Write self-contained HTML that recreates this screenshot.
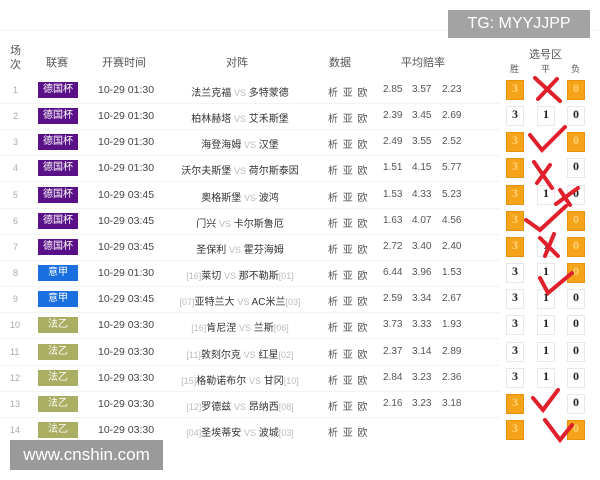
<!DOCTYPE html>
<html><head><meta charset="utf-8"><style>
body{margin:0;width:600px;height:480px;background:#fff;position:relative;overflow:hidden;font-family:"Liberation Sans","Noto Sans CJK SC",sans-serif;color:#444}
.a{position:absolute;white-space:nowrap}
.h{font-size:11px;color:#555}
.n{font-size:9px;color:#aaa;left:10px}
.lg{left:38px;width:40px;height:16px;color:#fff;font-size:10px;text-align:center;line-height:16px}
.t{left:98px;font-size:10.5px;color:#444}
.m{width:200px;left:140px;text-align:center;font-size:10px;color:#333}
.m i{font-style:normal;color:#bbb;font-size:9px}
.d{left:328px;font-size:10px;color:#555;letter-spacing:1px}
.o{font-size:10px;color:#555}
.b{width:18px;height:20px;line-height:20px;text-align:center;font:bold 12px "Liberation Serif",serif;color:#222;border:1px solid #e8e8e8;box-sizing:border-box;background:#fff}
.or{background:#f5a318;border-color:#e89010;color:#ffd27a}
</style></head><body>
<div class="a" style="left:0;top:30px;width:600px;height:1px;background:#f2f2f2"></div>
<div class="a h" style="left:10px;top:44px;line-height:14px;font-size:11px">场<br>次</div>
<div class="a h" style="left:46px;top:54px">联赛</div>
<div class="a h" style="left:102px;top:54px">开赛时间</div>
<div class="a h" style="left:226px;top:54px">对阵</div>
<div class="a h" style="left:329px;top:54px">数据</div>
<div class="a h" style="left:401px;top:54px">平均赔率</div>
<div class="a h" style="left:529px;top:46px">选号区</div>
<div class="a" style="left:510px;top:62px;font-size:9px;color:#555">胜</div>
<div class="a" style="left:541px;top:62px;font-size:9px;color:#555">平</div>
<div class="a" style="left:571px;top:62px;font-size:9px;color:#555">负</div>
<div class="a" style="left:448px;top:10px;width:142px;height:28px;background:#a3a3a3;color:#fff;font-size:16px;line-height:28px;text-align:center">TG: MYYJJPP</div>
<div id="rows"></div>
<div class="a" style="left:10px;top:440px;width:153px;height:30px;background:#9a9a9a;color:#fff;font-size:17px;line-height:30px;text-align:center">www.cnshin.com</div>
<svg class="a" style="left:0;top:0" width="600" height="480">
<g stroke="#e0202a" stroke-width="4" fill="none" stroke-linecap="round">
<path d="M535 78 L560 101 M557 79 L538 99"/>
<path d="M530 135 L542 150 L565 127"/>
<path d="M534 162 L552 188 M550 165 L537 183"/>
<path d="M556 204 L578 188 M560 190 L570 205"/>
<path d="M526 220 L540 230 L566 206"/>
<path d="M540 238 L558 256 M554 234 L545 256"/>
<path d="M540 278 L548 293 L572 273"/>
<path d="M533 398 L543 410 L558 390"/>
<path d="M545 420 L560 440 L572 425"/>
</g></svg>
<script>
var R=[["1","德国杯","#5a1087","10-29 01:30","","法兰克福","多特蒙德","","2.85","3.57","2.23","oho"],
["2","德国杯","#5a1087","10-29 01:30","","柏林赫塔","艾禾斯堡","","2.39","3.45","2.69","www"],
["3","德国杯","#5a1087","10-29 01:30","","海登海姆","汉堡","","2.49","3.55","2.52","oho"],
["4","德国杯","#5a1087","10-29 01:30","","沃尔夫斯堡","荷尔斯泰因","","1.51","4.15","5.77","ohw"],
["5","德国杯","#5a1087","10-29 03:45","","奥格斯堡","波鸿","","1.53","4.33","5.23","oww"],
["6","德国杯","#5a1087","10-29 03:45","","门兴","卡尔斯鲁厄","","1.63","4.07","4.56","oho"],
["7","德国杯","#5a1087","10-29 03:45","","圣保利","霍芬海姆","","2.72","3.40","2.40","owo"],
["8","意甲","#1a6fe0","10-29 01:30","[16]","莱切","那不勒斯","[01]","6.44","3.96","1.53","wwo"],
["9","意甲","#1a6fe0","10-29 03:45","[07]","亚特兰大","AC米兰","[03]","2.59","3.34","2.67","www"],
["10","法乙","#a9ae62","10-29 03:30","[16]","肯尼涅","兰斯","[06]","3.73","3.33","1.93","www"],
["11","法乙","#a9ae62","10-29 03:30","[11]","敦刻尔克","红星","[02]","2.37","3.14","2.89","www"],
["12","法乙","#a9ae62","10-29 03:30","[15]","格勒诺布尔","甘冈","[10]","2.84","3.23","2.36","www"],
["13","法乙","#a9ae62","10-29 03:30","[12]","罗德兹","昂纳西","[08]","2.16","3.23","3.18","ohw"],
["14","法乙","#a9ae62","10-29 03:30","[04]","圣埃蒂安","波城","[03]","","","","oho"]];
var h="";R.forEach(function(r,i){var c=90+i*26.15,t=c-6;
h+='<div class="a n" style="top:'+(c-5)+'px;left:'+(r[0].length>1?10:13)+'px">'+r[0]+'</div>';
h+='<div class="a lg" style="top:'+(c-8)+'px;background:'+r[2]+'">'+r[1]+'</div>';
h+='<div class="a t" style="top:'+t+'px">'+r[3]+'</div>';
h+='<div class="a m" style="top:'+t+'px"><i>'+r[4]+'</i>'+r[5]+' <i>VS</i> '+r[6]+'<i>'+r[7]+'</i></div>';
h+='<div class="a d" style="top:'+t+'px">析 亚 欧</div>';
h+='<div class="a o" style="top:'+t+'px;left:383px">'+r[8]+'</div><div class="a o" style="top:'+t+'px;left:412px">'+r[9]+'</div><div class="a o" style="top:'+t+'px;left:442px">'+r[10]+'</div>';
var xs=[506,537,567],v=["3","1","0"];for(var k=0;k<3;k++){var s=r[11][k];if(s=="h")continue;
h+='<div class="a b'+(s=="o"?' or':'')+'" style="left:'+xs[k]+'px;top:'+(c-10)+'px">'+v[k]+'</div>';}
if(i<13)h+='<div class="a" style="left:0;top:'+(c+13)+'px;width:500px;height:1px;background:#f3f3f3"></div>';
});document.getElementById("rows").innerHTML=h;
</script>
</body></html>
